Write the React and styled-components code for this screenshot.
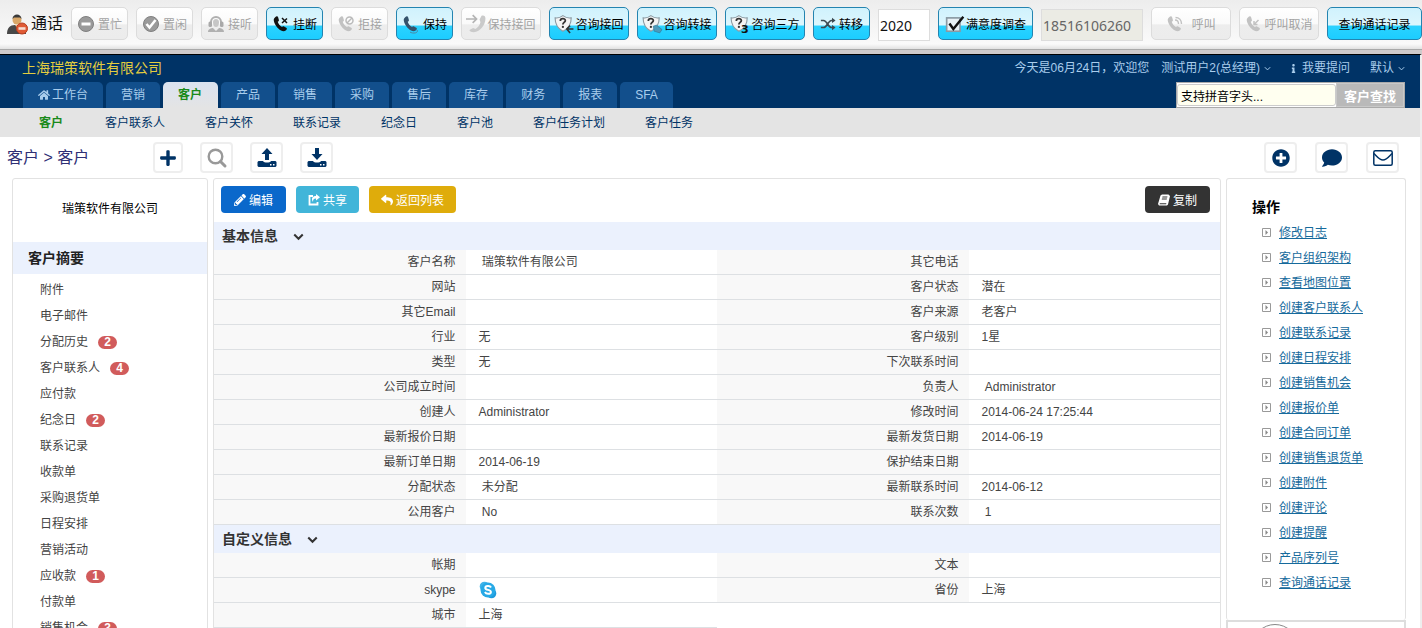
import React, { useState } from 'react';
import styled, { createGlobalStyle, css } from 'styled-components';
import {
  FaHome,
  FaPlus,
  FaPlusCircle,
  FaComment,
  FaPencilAlt,
  FaReply,
  FaInfo,
} from 'react-icons/fa';

const GlobalStyle = createGlobalStyle`
  * {
    box-sizing: border-box;
  }
  body {
    margin: 0;
    background: #fff;
    color: #444;
    font: 12px/24px 'Liberation Sans', 'Noto Sans CJK SC', sans-serif;
  }
  button,
  input {
    font-family: inherit;
  }
  ul {
    list-style: none;
    margin: 0;
    padding: 0;
  }
  a {
    text-decoration: none;
    color: inherit;
  }
  svg {
    flex: none;
    overflow: visible;
  }
`;

// data
const tabs = ['营销', '客户', '产品', '销售', '采购', '售后', '库存', '财务', '报表', 'SFA'];

const subLinks = [
  '客户',
  '客户联系人',
  '客户关怀',
  '联系记录',
  '纪念日',
  '客户池',
  '客户任务计划',
  '客户任务',
];

const summary = [
  { name: '附件' },
  { name: '电子邮件' },
  { name: '分配历史', count: 2 },
  { name: '客户联系人', count: 4 },
  { name: '应付款' },
  { name: '纪念日', count: 2 },
  { name: '联系记录' },
  { name: '收款单' },
  { name: '采购退货单' },
  { name: '日程安排' },
  { name: '营销活动' },
  { name: '应收款', count: 1 },
  { name: '付款单' },
  { name: '销售机会', count: 3 },
];

const basicRows = [
  ['客户名称', '\u00a0瑞策软件有限公司', '其它电话', ''],
  ['网站', '', '客户状态', '潜在'],
  ['其它Email', '', '客户来源', '老客户'],
  ['行业', '无', '客户级别', '1星'],
  ['类型', '无', '下次联系时间', ''],
  ['公司成立时间', '', '负责人', '\u00a0Administrator'],
  ['创建人', 'Administrator', '修改时间', '2014-06-24 17:25:44'],
  ['最新报价日期', '', '最新发货日期', '2014-06-19'],
  ['最新订单日期', '2014-06-19', '保护结束日期', ''],
  ['分配状态', '\u00a0未分配', '最新联系时间', '2014-06-12'],
  ['公用客户', '\u00a0No', '联系次数', '\u00a01'],
];

const actions = [
  '修改日志',
  '客户组织架构',
  '查看地图位置',
  '创建客户联系人',
  '创建联系记录',
  '创建日程安排',
  '创建销售机会',
  '创建报价单',
  '创建合同订单',
  '创建销售退货单',
  '创建附件',
  '创建评论',
  '创建提醒',
  '产品序列号',
  '查询通话记录',
];

// icons
const HANDSET =
  'M3.2 2.2C4.4.9 5.9 1.200 6.200 2.400L6.900 5C7.100 5.900 6.600 6.400 5.700 6.800C6.300 8.900 8 11 10 12.100C10.700 11.300 11.300 11.100 12 11.500L14.300 12.800C15.300 13.400 15 14.800 13.700 15.600C11.700 16.800 8.900 16 6.300 13.500C3.500 10.800 1.400 6.800 1.800 4.300C1.900 3.500 2.500 2.900 3.200 2.200Z';

const Svg = ({ size = 18, children }) => (
  <svg width={size} height={size} viewBox="0 0 18 18" fill="none" aria-hidden="true">
    {children}
  </svg>
);

const AgentIcon = () => (
  <svg width="22" height="22" viewBox="0 0 22 22" aria-hidden="true">
    <path d="M0 21C0 15 3 12 8 12h4c4 0 7 3 7 9Z" fill="#484848" />
    <circle cx="10" cy="7" r="4.500" fill="#d9a768" />
    <path d="M5.500 6C5.500 0 14.500 0 14.500 6L13 4.500H7Z" fill="#3a3a3a" />
    <path d="M8 12h4l-2 3Z" fill="#e9c18d" />
    <circle cx="15" cy="15.500" r="5.500" fill="#df5a35" stroke="#b83e20" />
    <path d="M11.500 14.200h7v2.600h-7Z" fill="#f7ddd3" />
  </svg>
);

const BusyIcon = () => (
  <Svg>
    <circle cx="9" cy="9" r="7.500" fill="#9a9a9a" stroke="#808080" />
    <path d="M4.500 7.500h9v3h-9Z" fill="#fff" />
  </Svg>
);

const IdleIcon = () => (
  <Svg>
    <circle cx="9" cy="9" r="7.500" fill="#9a9a9a" stroke="#808080" />
    <path d="M4.500 9l3 3.500L13.500 5" stroke="#fff" strokeWidth="2.500" />
  </Svg>
);

const HeadsetIcon = () => (
  <Svg>
    <path d="M4 9V7a5 5 0 0 1 10 0v2" stroke="#b0b0b0" strokeWidth="2" />
    <rect x="1.500" y="6.500" width="3.500" height="5.500" rx="1.500" fill="#a9a9a9" />
    <rect x="13" y="6.500" width="3.500" height="5.500" rx="1.500" fill="#a9a9a9" />
    <path d="M6 7c0-4 6-4 6 0 0 3-1 5-3 5S6 10 6 7Z" fill="#c6c6c6" />
    <path d="M1 17c0-3 3-4 5-4l3 3 3-3c2 0 5 1 5 4Z" fill="#b0b0b0" />
  </Svg>
);

const HangUpIcon = () => (
  <Svg>
    <path d={HANDSET} fill="#111" />
    <path d="M10 3l5 5M15 3.500L10 8" stroke="#111" strokeWidth="1.500" />
  </Svg>
);

const RejectIcon = () => (
  <Svg>
    <path d={HANDSET} fill="#c2c2c2" />
    <circle cx="12.500" cy="5.500" r="3.500" stroke="#bbb" strokeWidth="1.500" />
    <path d="M10 8l5-5" stroke="#bbb" strokeWidth="1.500" />
  </Svg>
);

const HoldIcon = () => (
  <Svg>
    <path d={HANDSET} fill="#35526b" />
    <path d="M8 17c3 2 9 1 7-2" stroke="#4b87a3" />
  </Svg>
);

const HoldBackIcon = () => (
  <Svg size={20}>
    <path d="M0 4.500h9M6 1L9.500 4.500 6 8" stroke="#b4b4b4" strokeWidth="1.500" />
    <path
      d="M14 1.500c2.500-.5 3.500.5 3.500 2.500C17.500 10 13 15.500 7 16.500c-2 0-3.500-.5-4-2l3.500-2 2 1c2-1 4-3.500 4.500-6l-.8-2.500Z"
      fill="#cacaca"
    />
  </Svg>
);

// Speech shield with a question mark, shared by the three consult buttons
const ConsultIcon = ({ kind }) => (
  <Svg size={20}>
    <path
      d="M1 3.500C4 4 6 3 8 1.500 10 3 12.500 4 15.500 3.500 15.500 9 13 13 8 15.500 3.500 13 1 9 1 3.500Z"
      fill="#f4f4f4"
      stroke="#8b9aa2"
    />
    <path
      d="M5.700 6.200C5.700 3.500 10.300 3.500 10.200 6 10 7.600 8 7.600 8 9.500"
      stroke="#333"
      strokeWidth="1.600"
    />
    <circle cx="8" cy="11.600" r="1" fill="#333" />
    {kind === 'back' && (
      <path d="M17.500 13.500H12M14.500 10.500l-3 3 3 3.500" stroke="#333" strokeWidth="1.400" />
    )}
    {kind === 'switch' && (
      <path d="M10 11l3-1 5 4-2 3-5-1.500Z" fill="#4b9abb" stroke="#2b7392" strokeWidth=".5" />
    )}
    {kind === 'three' && (
      <text x="10" y="17" fontSize="10" fontWeight="700" fill="#111" fontFamily="DejaVu Sans">
        3
      </text>
    )}
  </Svg>
);

const ShuffleIcon = () => (
  <Svg size={16}>
    <path
      d="M1 5h3c4 0 5 8 9 8h3M1 13h3c4 0 5-8 9-8h3"
      stroke="#3c4a52"
      strokeWidth="1.800"
    />
    <path d="M13.500 2l4 3-4 3ZM13.500 10l4 3-4 3Z" fill="#3c4a52" />
  </Svg>
);

const CheckIcon = () => (
  <Svg size={20}>
    <rect x="1.500" y="3.500" width="12" height="12" fill="#e8f1f5" stroke="#8a9aa4" strokeWidth="1.500" />
    <path d="M4 8.500l3.500 5L16.500 2.500" stroke="#111" strokeWidth="2.200" />
  </Svg>
);

const CallIcon = () => (
  <Svg>
    <path d={HANDSET} fill="#c2c2c2" />
    <path
      d="M9 5c2 0 3.500 1.500 3.500 4M9.500 2.500C13 2.500 15.500 5 15.500 9"
      stroke="#c2c2c2"
      strokeWidth="1.400"
    />
  </Svg>
);

const CancelIcon = () => (
  <Svg>
    <path d={HANDSET} fill="#c2c2c2" />
    <path d="M13.500 5l-4 4M9 6v3.500h3.500" stroke="#c2c2c2" strokeWidth="1.500" />
  </Svg>
);

const SearchIcon = () => (
  <svg width="20" height="20" viewBox="0 0 20 20" fill="none" aria-hidden="true">
    <circle cx="8.500" cy="8.500" r="6.800" stroke="#999" strokeWidth="2.400" />
    <path d="M13.500 13.500l4.500 4.500" stroke="#999" strokeWidth="3" strokeLinecap="round" />
  </svg>
);

const TrayIcon = ({ up }) => (
  <svg width="20" height="20" viewBox="0 0 20 20" fill="#036" aria-hidden="true">
    {up ? (
      <path d="M10 0l5.500 6H12v6H8V6H4.500Z" />
    ) : (
      <path d="M8 0h4v6h3.500L10 12 4.500 6H8Z" />
    )}
    <path
      fillRule="evenodd"
      d="M1.500 13H6c1 2 7 2 8 0h4.500l1 1v4l-1 1h-17l-1-1v-4ZM13 16v1.500h1.500V16ZM16 16v1.500h1.500V16Z"
    />
  </svg>
);

const EnvelopeIcon = () => (
  <svg width="20" height="16" viewBox="0 0 20 16" fill="none" aria-hidden="true">
    <rect x=".8" y=".8" width="18.400" height="14.400" rx="1.500" stroke="#036" strokeWidth="1.500" />
    <path d="M1 3.500c3 3 5.500 6.500 9 6.500s6-3.500 9-6.500" stroke="#036" strokeWidth="1.500" />
  </svg>
);

const ShareIcon = () => (
  <svg width="12" height="12" viewBox="0 0 12 12" fill="none" aria-hidden="true">
    <path d="M5 2H1.500v8.500h8V8" stroke="#fff" strokeWidth="1.800" />
    <path d="M8 0l4 3.200-4 3.300V4.600C6 4.500 5 5.500 5 8 2.800 4.500 4.500 2 8 2Z" fill="#fff" />
  </svg>
);

const BookIcon = () => (
  <svg width="12" height="12" viewBox="0 0 12 12" aria-hidden="true">
    <path
      fillRule="evenodd"
      fill="#fff"
      d="M4 .5h6.500L12 2l-2 8.500-1 1H1L0 10 2.500 1.500ZM4.500 2.500l-.3 1h5l.3-1ZM4 4.500l-.3 1h5l.3-1ZM1.800 9.300l-.2.900h6.500l.3-.9Z"
    />
  </svg>
);

const Chevron = ({ size = 7, width = 1 }) => (
  <svg width={size} height={size} viewBox="0 0 7 7" fill="none" aria-hidden="true">
    <path d="M.8 2.200L3.500 4.900 6.200 2.200" stroke="currentColor" strokeWidth={width} />
  </svg>
);

const BulletIcon = () => (
  <svg width="9" height="9" viewBox="0 0 9 9" fill="none" aria-hidden="true">
    <path d="M.5.5h8v8h-8Z" stroke="#999" />
    <path d="M3.500 2v5L6 4.500Z" fill="#888" />
  </svg>
);

const SkypeIcon = () => (
  <svg width="18" height="18" viewBox="0 0 18 18" aria-label="skype">
    <circle cx="5.500" cy="5.500" r="4.800" fill="#3fb4ea" />
    <circle cx="12.500" cy="12.500" r="4.800" fill="#1e9bdc" />
    <circle cx="9" cy="9" r="7.500" fill="#27a9e6" />
    <path
      d="M12 6.500C11 4.300 6.300 4.500 6.300 6.900c0 2.500 5.600 1.400 5.600 4 0 2.300-4.600 2.700-6 .2"
      fill="none"
      stroke="#fff"
      strokeWidth="2"
    />
  </svg>
);

// call bar
const callButtons = [
  { label: '置忙', icon: <BusyIcon />, disabled: true },
  { label: '置闲', icon: <IdleIcon />, disabled: true },
  { label: '接听', icon: <HeadsetIcon />, disabled: true },
  { label: '挂断', icon: <HangUpIcon /> },
  { label: '拒接', icon: <RejectIcon />, disabled: true },
  { label: '保持', icon: <HoldIcon /> },
  { label: '保持接回', icon: <HoldBackIcon />, width: 80, disabled: true },
  { label: '咨询接回', icon: <ConsultIcon kind="back" />, width: 80 },
  { label: '咨询转接', icon: <ConsultIcon kind="switch" />, width: 80 },
  { label: '咨询三方', icon: <ConsultIcon kind="three" />, width: 80 },
  { label: '转移', icon: <ShuffleIcon /> },
];

const Page = styled.div`
  display: flex;
  flex-direction: column;
  height: 100vh;
`;
const CallBar = styled.div`
  flex: none;
  display: flex;
  align-items: flex-start;
  gap: 8px;
  height: 54px;
  padding: 7px 0 0 7px;
  overflow: hidden;
  background: linear-gradient(#ededed, #fafafa 44px, #e2e2e2 49px);
  border-bottom: 4px solid #cfcbcb;
  box-shadow: inset 0 -1px #a9a9a9;
`;
const Status = styled.div`
  flex: none;
  display: flex;
  align-items: center;
  gap: 2px;
  width: 56px;
  height: 34px;
  color: #111;
  font-size: 16px;
`;
const CallButton = styled.button`
  flex: none;
  display: flex;
  align-items: center;
  justify-content: center;
  gap: ${({ $width }) => ($width ? 1 : 3)}px;
  width: ${({ $width }) => $width || 57}px;
  height: 33px;
  padding: 0;
  border: 1px solid #2484b0;
  border-radius: 5px;
  background: linear-gradient(#d0f2fd, #dcf6fd 55%, #2bd2ff 58%, #1ccdff);
  color: #000;
  font-size: 12px;
  cursor: pointer;

  &:disabled {
    border-color: #dcdcdc;
    background: linear-gradient(#fff, #fafafa 50%, #ededed 55%, #ececec);
    color: #a3a3a3;
    cursor: default;
  }
`;
const CallInput = styled.input`
  flex: none;
  width: ${({ $width }) => $width}px;
  height: 32px;
  margin-top: 2px;
  padding: 0 1px;
  border: 1px solid #ddd;
  border-radius: 0;
  background: #fff;
  color: #111;
  font: 14px 'Noto Sans', sans-serif;

  &:disabled {
    background: #ebebe4;
    color: #666;
  }
`;

// header
const Frame = styled.div`
  flex: 1;
  min-height: 0;
  overflow-y: auto;
  scrollbar-width: none;
  border-top: 1px solid #000;
  border-right: 2px solid #eee;
`;
const Header = styled.header`
  padding: 0 15px 0 22px;
  background: #036;
`;
const UserBar = styled.div`
  display: flex;
  justify-content: space-between;
  padding: 1px 0 2px;
`;
const TabBar = styled.div`
  display: flex;
  justify-content: space-between;
  padding-left: 1px;
`;
const Company = styled.div`
  color: #e3cd3f;
  font-size: 14px;
`;
const UserLinks = styled.div`
  display: flex;
  align-items: center;
  color: #a9cdec;
`;
const UserLink = styled.a`
  display: flex;
  align-items: center;
  gap: 4px;
  margin-left: ${({ $gap }) => $gap}px;
`;
const Tabs = styled.nav`
  display: flex;
  gap: 3px;
`;
const Tab = styled.a`
  display: flex;
  align-items: center;
  gap: 2px;
  height: 26px;
  padding: 0 15px;
  border-radius: 5px 5px 0 0;
  background: #124f8c;
  color: #a9cdec;

  ${({ $active }) =>
    $active &&
    css`
      padding-right: 16px;
      background: linear-gradient(#dbe3f0, #e4e4e4);
      color: #1a8a1a;
      font-weight: 700;
    `}
`;
const SearchForm = styled.form`
  display: flex;
  width: 229px;
  height: 26px;
  border: 1px solid #aaa;
  background: #fff;
`;
const SearchInput = styled.input`
  flex: 1;
  min-width: 0;
  margin: 1px 0;
  padding: 0 3px;
  border: 1px solid #ccc;
  border-radius: 3px;
  background: #fffff0;
  color: #000;
  font-size: 12px;
`;
const SearchButton = styled.button`
  width: 68px;
  padding: 0;
  border: 1px solid #c8c8c8;
  background: #b9b9b9;
  color: #fff;
  font-size: 13px;
  font-weight: 700;
`;
const SubNav = styled.nav`
  display: flex;
  align-items: center;
  gap: 40px;
  height: 29px;
  padding-left: 39px;
  background: #e4e4e4;
  color: #036;
`;
const SubLink = styled.a`
  ${({ $active }) =>
    $active &&
    css`
      padding-right: 2px;
      color: #1a8a1a;
      font-weight: 700;
    `}
`;

// title row
const TitleBar = styled.div`
  display: flex;
  align-items: center;
  height: 41px;
  padding: 0 21px 0 7px;
`;
const Title = styled.h1`
  width: 146px;
  margin: 0;
  color: #2f2f75;
  font-size: 16px;
  font-weight: 400;
`;
const Tools = styled.div`
  display: flex;
  gap: 17px;

  &:last-child {
    gap: 18px;
    margin-left: auto;
  }
`;
const ToolButton = styled.button`
  display: flex;
  align-items: center;
  justify-content: center;
  width: ${({ $narrow }) => ($narrow ? 30 : 33)}px;
  height: 31px;
  padding: 0;
  border: 2px solid #eee;
  border-radius: 4px;
  background: #fff;
  color: #036;
`;

// panels
const Columns = styled.main`
  display: grid;
  grid-template-columns: 196px minmax(0, 1fr) 180px;
  gap: 5px;
  padding: 0 14px 0 12px;
`;
const Panel = styled.section`
  border: 1px solid #e2e2e2;
  border-radius: 3px;
`;
const CustomerName = styled.div`
  height: 63px;
  color: #000;
  line-height: 60px;
  text-align: center;
`;
const SummaryTitle = styled.h2`
  margin: 0 0 3px;
  padding-left: 15px;
  background: #ebf1fd;
  color: #222;
  font-size: 14px;
  line-height: 32px;
`;
const SummaryItem = styled.li`
  display: flex;
  align-items: center;
  gap: 10px;
  height: 26px;
  padding-left: 27px;
`;
const Badge = styled.span`
  width: 19px;
  border-radius: 7px;
  background: #d15b5b;
  color: #fff;
  font-weight: 700;
  line-height: 13px;
  text-align: center;
`;
const Buttons = styled.div`
  display: flex;
  gap: 10px;
  padding: 7px 10px 9px 7px;

  button:last-child {
    margin-left: auto;
  }
`;
const ActionButton = styled.button`
  display: flex;
  align-items: center;
  gap: 3px;
  height: 27px;
  padding: 0 ${({ $pad }) => $pad || 13}px;
  border: 0;
  border-radius: 4px;
  background: ${({ $color }) => $color};
  color: #fff;
  font-size: 12px;
`;
const SectionTitle = styled.h2`
  display: flex;
  align-items: center;
  gap: 15px;
  height: 28px;
  margin: 0;
  padding-left: 8px;
  background: #ebf1fd;
  color: #333;
  font-size: 14px;
`;
const Table = styled.table`
  width: 100%;
  table-layout: fixed;
  border-collapse: separate;
  border-spacing: 0;
`;
const Label = styled.th`
  height: 25px;
  padding: 0 10px 0 0;
  border-bottom: 1px solid #dde0e3;
  background: #f8f8f8;
  font-weight: 400;
  text-align: right;
`;
const Value = styled.td`
  height: 25px;
  padding: 0 0 0 13px;
  border-bottom: 1px solid #dde0e3;

  svg {
    display: block;
  }
`;
const Actions = styled(Panel)`
  padding: 15px 0 25px 25px;
  border-bottom: 0;
`;
const ActionsTitle = styled.h2`
  margin: 0;
  color: #000;
  font-size: 14px;
  line-height: 26px;
`;
const ActionItem = styled.li`
  display: flex;
  align-items: center;
  gap: 8px;
  height: 25px;
  padding-left: 10px;

  a {
    color: #166a9c;
    text-decoration: underline;
  }
`;
const Widget = styled.div`
  height: 60px;
  padding: 2px 0 0 24px;
  border: 2px solid #ddd;
`;
const Dial = styled.div`
  width: 46px;
  height: 46px;
  border: 1px solid #888;
  border-radius: 50%;
`;

const Section = ({ title, children }) => (
  <>
    <SectionTitle>
      {title}
      <Chevron size={11} width={1.3} />
    </SectionTitle>
    <Table>
      <tbody>{children}</tbody>
    </Table>
  </>
);

const Row = ({ cells }) => (
  <tr>
    <Label scope="row">{cells[0]}</Label>
    <Value>{cells[1]}</Value>
    {cells.length > 2 && (
      <>
        <Label scope="row">{cells[2]}</Label>
        <Value>{cells[3]}</Value>
      </>
    )}
  </tr>
);

const App = () => {
  const [extension, setExtension] = useState('2020');
  const [keyword, setKeyword] = useState('支持拼音字头...');

  return (
    <Page>
      <GlobalStyle />
      <CallBar>
        <Status>
          <AgentIcon />
          通话
        </Status>
        {callButtons.map(({ label, icon, width, disabled }) => (
          <CallButton key={label} $width={width} disabled={disabled}>
            {icon}
            {label}
          </CallButton>
        ))}
        <CallInput
          aria-label="分机"
          $width={52}
          value={extension}
          onChange={(e) => setExtension(e.target.value)}
        />
        <CallButton $width={95}>
          <CheckIcon />
          满意度调查
        </CallButton>
        <CallInput aria-label="号码" $width={102} value="18516106260" disabled readOnly />
        <CallButton $width={80} disabled>
          <CallIcon />
          &nbsp;&nbsp;呼叫
        </CallButton>
        <CallButton $width={80} disabled>
          <CancelIcon />
          呼叫取消
        </CallButton>
        <CallButton $width={95}>查询通话记录</CallButton>
      </CallBar>

      <Frame>
        <Header>
          <UserBar>
            <Company>上海瑞策软件有限公司</Company>
            <UserLinks>
              今天是06月24日，欢迎您
              <UserLink href="#" $gap={12}>
                测试用户2(总经理)
                <Chevron />
              </UserLink>
              <UserLink href="#" $gap={18}>
                <FaInfo size={9} />
                我要提问
              </UserLink>
              <UserLink href="#" $gap={20}>
                默认
                <Chevron />
              </UserLink>
            </UserLinks>
          </UserBar>
          <TabBar>
            <Tabs>
              <Tab href="#">
                <FaHome size={12} />
                工作台
              </Tab>
              {tabs.map((name) => (
                <Tab key={name} href="#" $active={name === '客户'}>
                  {name}
                </Tab>
              ))}
            </Tabs>
            <SearchForm onSubmit={(e) => e.preventDefault()}>
              <SearchInput
                aria-label="客户查找"
                value={keyword}
                onChange={(e) => setKeyword(e.target.value)}
              />
              <SearchButton>客户查找</SearchButton>
            </SearchForm>
          </TabBar>
        </Header>
        <SubNav>
          {subLinks.map((name, i) => (
            <SubLink key={name} href="#" $active={i === 0}>
              {name}
            </SubLink>
          ))}
        </SubNav>

        <TitleBar>
          <Title>客户 &gt; 客户</Title>
          <Tools>
            <ToolButton $narrow aria-label="新建">
              <FaPlus size={18} />
            </ToolButton>
            <ToolButton aria-label="查找">
              <SearchIcon />
            </ToolButton>
            <ToolButton aria-label="导入">
              <TrayIcon up />
            </ToolButton>
            <ToolButton aria-label="导出">
              <TrayIcon />
            </ToolButton>
          </Tools>
          <Tools>
            <ToolButton aria-label="快速新建">
              <FaPlusCircle size={18} />
            </ToolButton>
            <ToolButton aria-label="消息">
              <FaComment size={20} />
            </ToolButton>
            <ToolButton aria-label="邮件">
              <EnvelopeIcon />
            </ToolButton>
          </Tools>
        </TitleBar>

        <Columns>
          <Panel>
            <CustomerName>瑞策软件有限公司</CustomerName>
            <SummaryTitle>客户摘要</SummaryTitle>
            <ul>
              {summary.map(({ name, count }) => (
                <SummaryItem key={name}>
                  <a href="#">{name}</a>
                  {count && <Badge>{count}</Badge>}
                </SummaryItem>
              ))}
            </ul>
          </Panel>

          <Panel>
            <Buttons>
              <ActionButton $color="#0a68cb">
                <FaPencilAlt size={12} />
                编辑
              </ActionButton>
              <ActionButton $color="#41b5d9" $pad={12}>
                <ShareIcon />
                共享
              </ActionButton>
              <ActionButton $color="#dfac0b" $pad={12}>
                <FaReply size={12} />
                返回列表
              </ActionButton>
              <ActionButton $color="#333">
                <BookIcon />
                复制
              </ActionButton>
            </Buttons>
            <Section title="基本信息">
              {basicRows.map((cells) => (
                <Row key={cells[0]} cells={cells} />
              ))}
            </Section>
            <Section title="自定义信息">
              <Row cells={['帐期', '', '文本', '']} />
              <Row cells={['skype', <SkypeIcon key="skype" />, '省份', '上海']} />
              <Row cells={['城市', '上海']} />
            </Section>
          </Panel>

          <div>
            <Actions>
              <ActionsTitle>操作</ActionsTitle>
              <ul>
                {actions.map((name) => (
                  <ActionItem key={name}>
                    <BulletIcon />
                    <a href="#">{name}</a>
                  </ActionItem>
                ))}
              </ul>
            </Actions>
            <Widget>
              <Dial />
            </Widget>
          </div>
        </Columns>
      </Frame>
    </Page>
  );
};

export default App;
